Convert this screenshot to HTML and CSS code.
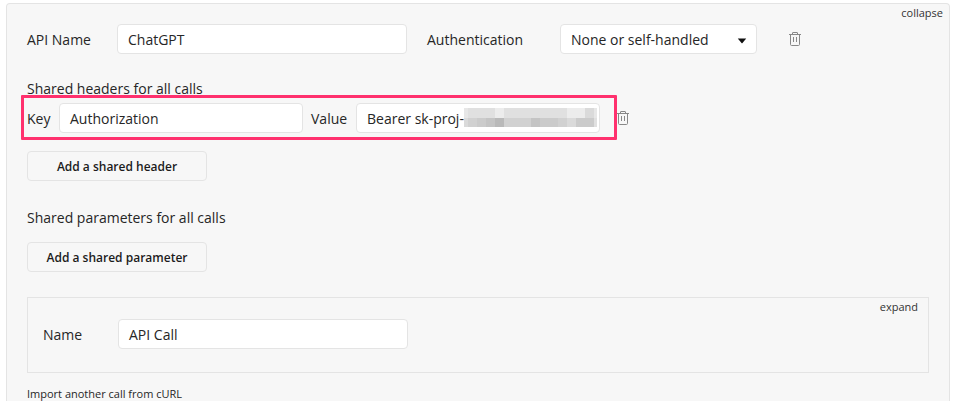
FILE: index.html
```html
<!DOCTYPE html>
<html lang="en">
<head>
<meta charset="utf-8">
<title>API settings</title>
<link rel="stylesheet" href="styles.css">
</head>
<body>
<main class="panel">
  <span class="toggle">collapse</span>
  <div class="row">
    <span class="label api-label">API Name</span>
    <div class="field wide">ChatGPT</div>
    <span class="label auth-label">Authentication</span>
    <div class="field select">None or self-handled
      <svg class="caret" width="10" height="6" viewBox="0 0 10 6"><path d="M.8.5h8.4L5.5 5Q5 5.4 4.5 5Z" fill="#111"/></svg>
    </div>
    <svg class="trash trash-api" width="12" height="14" viewBox="0 0 12 14"><path d="M0 2.5h12M3.5 2V.9q0-.4.4-.4h4.2q.4 0 .4.4V2M1.5 2.5v9.9q0 1.1 1.1 1.1h6.8q1.1 0 1.1-1.1V2.5M4.5 5v5M7.5 5v5"/></svg>
  </div>
  <h2 class="title headers-title">Shared headers for all calls</h2>
  <div class="row header-row">
    <span class="label key-label">Key</span>
    <div class="field pair">Authorization</div>
    <span class="label value-label">Value</span>
    <div class="field pair secret">Bearer sk-proj-
      <div class="mosaic">
        <i class="c1"></i><i class="c2"></i><i class="c2"></i><i class="c2"></i><i class="c0"></i><i class="c2"></i><i class="c2"></i><i class="c2"></i><i class="c2"></i><i class="c2"></i><i class="c2"></i><i class="c2"></i><i class="c0"></i><i class="c0"></i><i class="c3"></i><i class="c1"></i>
        <i class="c3"></i><i class="c4"></i><i class="c5"></i><i class="c6"></i><i class="c7"></i><i class="c4"></i><i class="c4"></i><i class="c4"></i><i class="c6"></i><i class="c5"></i><i class="c5"></i><i class="c4"></i><i class="c3"></i><i class="c5"></i><i class="c5"></i><i class="c2"></i>
      </div>
    </div>
    <svg class="trash trash-header" width="12" height="14" viewBox="0 0 12 14"><path d="M0 2.5h12M3.5 2V.9q0-.4.4-.4h4.2q.4 0 .4.4V2M1.5 2.5v9.9q0 1.1 1.1 1.1h6.8q1.1 0 1.1-1.1V2.5M4.5 5v5M7.5 5v5"/></svg>
    <div class="highlight"></div>
  </div>
  <button class="button add-header">Add a shared header</button>
  <h2 class="title params-title">Shared parameters for all calls</h2>
  <button class="button add-param">Add a shared parameter</button>
  <section class="call">
    <span class="toggle">expand</span>
    <div class="row">
      <span class="label name-label">Name</span>
      <div class="field wide">API Call</div>
    </div>
  </section>
  <p class="import">Import another call from cURL</p>
</main>
</body>
</html>
```
FILE: styles.css
```css
* { box-sizing: border-box; }
body {
  margin: 0;
  padding-top: 3px;
  height: 401px;
  overflow: hidden;
  background: #fff;
  color: #262626;
  font: 14px/20px "Open Sans", "Noto Sans", sans-serif;
}
.panel {
  position: relative;
  width: 944px;
  height: 398px;
  margin-left: 6px;
  padding: 20px 20px 0;
  background: #f7f7f7;
  border: 1px solid #e4e4e4;
  border-bottom: 0;
  border-radius: 4px 4px 0 0;
}
.toggle {
  position: absolute;
  top: 2px;
  right: 6px;
  font-size: 11px;
  line-height: 14px;
  color: #333;
}
.row { position: relative; display: flex; align-items: center; height: 30px; }
.label { flex: none; padding-top: 2px; }
.api-label { width: 90px; }
.auth-label { width: 133px; margin-left: 20px; }
.key-label { width: 32px; }
.value-label { width: 45px; margin-left: 8px; }
.name-label { width: 75px; }
.field {
  position: relative;
  flex: none;
  height: 30px;
  padding: 5px 10px 3px;
  background: #fff;
  border: 1px solid #e4e4e4;
  border-radius: 4px;
  white-space: nowrap;
}
.wide { width: 290px; }
.select { width: 197px; }
.pair { width: 244px; }
.caret { position: absolute; right: 9px; top: 13px; }
.trash { flex: none; fill: none; stroke: #888; stroke-width: 1; }
.trash-api { margin-left: 32px; }
.trash-header { margin-left: 17px; }
.title { margin: 0; font-size: 14px; line-height: 20px; font-weight: 400; }
.headers-title { margin-top: 25px; }
.header-row { margin-top: 4px; }
.highlight {
  position: absolute;
  left: -6px;
  top: -8.5px;
  width: 596px;
  height: 45.5px;
  border: 3px solid #ff316e;
  border-radius: 1px;
}
.mosaic {
  position: absolute;
  left: 107px;
  top: 4px;
  width: 133px;
  height: 19px;
  display: grid;
  grid-template-columns: 4px repeat(14, 9px) 3px;
  grid-template-rows: 10px 9px;
  overflow: hidden;
}
.c0 { background: #ececec; }
.c1 { background: #e7e7e7; }
.c2 { background: #e0e0e0; }
.c3 { background: #dadada; }
.c4 { background: #d1d1d1; }
.c5 { background: #cbcbcb; }
.c6 { background: #c4c4c4; }
.c7 { background: #b9b9b9; }
.button {
  display: block;
  width: 180px;
  height: 30px;
  padding: 1px 0 0;
  background: #f7f7f7;
  border: 1px solid #e4e4e4;
  border-radius: 4px;
  color: #1c1c1c;
  font: 600 12px/18px "Open Sans", "Noto Sans", sans-serif;
}
.add-header { margin-top: 18px; }
.params-title { margin-top: 27px; }
.add-param { margin-top: 14px; }
.call {
  position: relative;
  height: 76px;
  margin-top: 25px;
  padding: 21px 15px;
  border: 1px solid #e4e4e4;
}
.call .toggle { right: 10px; }
.import { margin: 13px 0 0; font-size: 11px; line-height: 15px; }
```
